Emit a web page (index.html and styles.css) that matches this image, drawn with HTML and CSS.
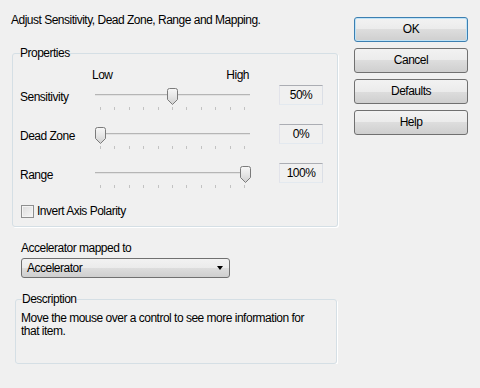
FILE: index.html
```html
<!DOCTYPE html>
<html lang="en">
<head>
    <meta charset="UTF-8">
    <title>Accelerator Properties</title>
    <link rel="stylesheet" href="styles.css">
</head>
<body>

    <svg class="defs" width="0" height="0">
        <linearGradient id="thumb-fill" x1="0" y1="0" x2="0" y2="1">
            <stop offset="0" stop-color="#f7f7f7"/>
            <stop offset="0.5" stop-color="#e6e6e6"/>
            <stop offset="1" stop-color="#cfcfcf"/>
        </linearGradient>
    </svg>

    <div class="dialog">
        <div class="main">
            <p class="intro">Adjust Sensitivity, Dead Zone, Range and Mapping.</p>

            <fieldset class="group props">
                <legend>Properties</legend>

                <div class="scale"><span>Low</span><span>High</span></div>

                <div class="row">
                    <span class="row-label">Sensitivity</span>
                    <div class="slider" style="--v: 0.5">
                        <div class="track"></div>
                        <div class="ticks"><i></i><i></i><i></i><i></i><i></i><i></i><i></i><i></i><i></i><i></i><i></i></div>
                        <svg class="thumb" width="11" height="17" viewBox="0 0 11 17"><path d="M0.5 2.5Q0.5 0.5 2.5 0.5H8.5Q10.5 0.5 10.5 2.5V11.5L5.5 16.5L0.5 11.5Z"/></svg>
                    </div>
                    <span class="value">50%</span>
                </div>

                <div class="row">
                    <span class="row-label">Dead Zone</span>
                    <div class="slider" style="--v: 0">
                        <div class="track"></div>
                        <div class="ticks"><i></i><i></i><i></i><i></i><i></i><i></i><i></i><i></i><i></i><i></i><i></i></div>
                        <svg class="thumb" width="11" height="17" viewBox="0 0 11 17"><path d="M0.5 2.5Q0.5 0.5 2.5 0.5H8.5Q10.5 0.5 10.5 2.5V11.5L5.5 16.5L0.5 11.5Z"/></svg>
                    </div>
                    <span class="value">0%</span>
                </div>

                <div class="row">
                    <span class="row-label">Range</span>
                    <div class="slider" style="--v: 1">
                        <div class="track"></div>
                        <div class="ticks"><i></i><i></i><i></i><i></i><i></i><i></i><i></i><i></i><i></i><i></i><i></i></div>
                        <svg class="thumb" width="11" height="17" viewBox="0 0 11 17"><path d="M0.5 2.5Q0.5 0.5 2.5 0.5H8.5Q10.5 0.5 10.5 2.5V11.5L5.5 16.5L0.5 11.5Z"/></svg>
                    </div>
                    <span class="value">100%</span>
                </div>

                <label class="check"><span class="box"></span>Invert Axis Polarity</label>
            </fieldset>

            <div class="mapping">
                <div>Accelerator mapped to</div>
                <div class="select"><span>Accelerator</span><span class="arrow"></span></div>
            </div>

            <fieldset class="group desc">
                <legend>Description</legend>
                <p>Move the mouse over a control to see more information for<br>that item.</p>
            </fieldset>
        </div>

        <div class="actions">
            <button class="btn default">OK</button>
            <button class="btn">Cancel</button>
            <button class="btn">Defaults</button>
            <button class="btn">Help</button>
        </div>
    </div>

</body>
</html>
```

FILE: styles.css
```css
body {
    margin: 0;
    background: #f0f0f0;
    color: #000;
    font: 12px/15px "Liberation Sans", Arial, sans-serif;
    letter-spacing: -0.5px;
}
.defs {
    display: block;
    height: 0;
}
.dialog {
    display: flex;
    align-items: flex-start;
}
.main {
    width: 327px;
    padding: 13px 0 0 11px;
}
.intro {
    margin: 0;
}

/* group boxes */
.group {
    margin: 0;
    border: 1px solid #d5dfe5;
    border-radius: 3px;
    box-shadow: 1px 1px 0 #fff;
}
.group legend {
    padding: 0;
    line-height: 15px;
}
.props {
    margin: 18px 0 0 1px;
    padding: 7px 7px 7px 7px;
}

.scale {
    display: flex;
    justify-content: space-between;
    width: 157px;
    height: 17px;
    margin-left: 72px;
}
.row {
    display: grid;
    grid-template-columns: 75px 155px 29px 44px;
    align-items: start;
    height: 39px;
}
.row-label {
    margin-top: 5px;
}

/* trackbar */
.slider {
    position: relative;
    margin-top: 3px;
    grid-column: 2;
}
.track {
    height: 1px;
    margin-top: 6px;
    border-top: 1px solid #b5b5b5;
    background: #e2e2e2;
}
.ticks {
    display: flex;
    justify-content: space-between;
    margin: 11px 5px 0;
}
.ticks i {
    width: 1px;
    height: 3px;
    background: #c2c2c2;
}
.thumb {
    position: absolute;
    top: 0;
    left: calc(5px + (100% - 10px) * var(--v));
    margin-left: -5.5px;
}
.thumb path {
    fill: url(#thumb-fill);
    stroke: #7b7b7b;
}

.value {
    grid-column: 4;
    height: 20px;
    box-sizing: border-box;
    border: 1px solid;
    border-color: #abadb3 #dbdfe6 #e3e9ef #e2e3ea;
    text-align: center;
    line-height: 18px;
}

.check {
    display: flex;
    align-items: center;
    gap: 3px;
    height: 17px;
    padding-top: 2px;
    box-sizing: border-box;
    margin-left: 1px;
}
.check .box {
    width: 11px;
    height: 11px;
    border: 1px solid #8e8f8f;
    background: linear-gradient(135deg, #dcdcdc, #f6f6f6);
    box-shadow: inset 0 0 0 1px #f4f4f4;
}

/* mapping combo */
.mapping {
    margin: 14px 0 0 10px;
}
.select {
    display: flex;
    justify-content: space-between;
    align-items: center;
    width: 209px;
    height: 20px;
    margin-top: 2px;
    padding: 0 6px 0 5px;
    box-sizing: border-box;
    border: 1px solid #707070;
    border-radius: 3px;
    background: linear-gradient(#f2f2f2 0%, #ebebeb 50%, #dddddd 50%, #cfcfcf 100%);
}
.arrow {
    border-left: 3.5px solid transparent;
    border-right: 3.5px solid transparent;
    border-top: 4px solid #000;
}

.desc {
    width: 322px;
    height: 72px;
    box-sizing: border-box;
    margin: 14px 0 0 4px;
    padding: 5px 5px 0;
}
.desc legend {
    margin-left: 1px;
}
.desc p {
    margin: 0;
    line-height: 13px;
}

/* buttons */
.actions {
    display: flex;
    flex-direction: column;
    gap: 6px;
    margin-left: 16px;
    padding-top: 17px;
}
.btn {
    width: 114px;
    height: 25px;
    border: 1px solid #707070;
    border-radius: 3px;
    background: linear-gradient(#f2f2f2 0%, #ebebeb 50%, #dddddd 50%, #cfcfcf 100%);
    color: #000;
    font: inherit;
    letter-spacing: inherit;
    padding: 0;
}
.btn.default {
    border-color: #3c7fb1;
    box-shadow: inset 0 0 0 1px #bfe3f7;
}
```
